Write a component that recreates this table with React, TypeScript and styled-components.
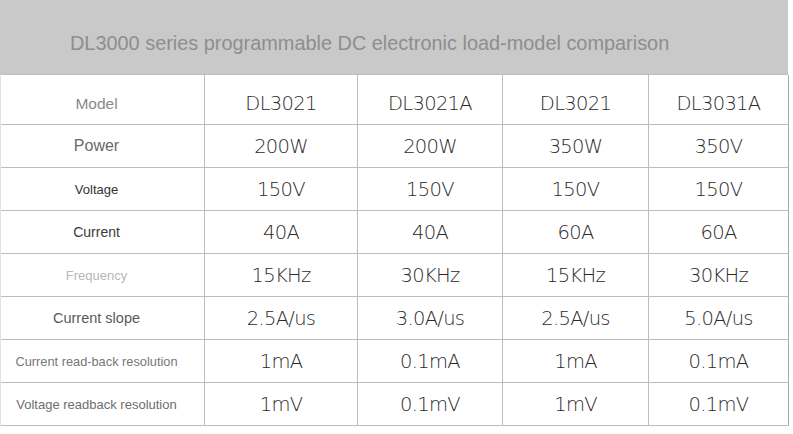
import React from "react";
import styled, { createGlobalStyle } from "styled-components";

const Global = createGlobalStyle`
  html, body { margin: 0; padding: 0; background: #ffffff; }
  body { font-family: "Liberation Sans", Arial, sans-serif; }
`;

const Page = styled.div`
  width: 793px;
  height: 434px;
  overflow: hidden;
  background: #ffffff;
`;

const Banner = styled.div`
  width: 788px;
  height: 74px;
  background: #c9c9c9;
  box-sizing: border-box;
  padding: 12px 0 0 70px;
  display: flex;
  align-items: center;
`;

const Title = styled.h1`
  margin: 0;
  font-family: "Liberation Sans", Arial, sans-serif;
  font-weight: 400;
  font-size: 19.9px;
  color: #8e8e8e;
  letter-spacing: 0;
`;

const Grid = styled.div`
  width: 788px;
  box-sizing: border-box;
  display: grid;
  grid-template-columns: 204px 153px 145px 146px 140px;
  grid-template-rows: 50px repeat(7, 43px);
  border-top: 1px solid #bdbdbd;
  border-left: 1px solid #e2e2e2;
`;

const Cell = styled.div<{ $last?: boolean; $first?: boolean }>`
  display: flex;
  align-items: center;
  justify-content: center;
  border-right: 1px solid ${(p) => (p.$last ? "#a8a8a8" : "#bdbdbd")};
  border-bottom: 1px solid #bdbdbd;
  box-sizing: border-box;
  padding-top: ${(p) => (p.$first ? "8px" : "0")};
  white-space: nowrap;
`;

const LabelCell = styled(Cell)<{ $size: number; $color: string }>`
  padding-right: 12px;
  font-family: "Liberation Sans", Arial, sans-serif;
  font-size: ${(p) => p.$size}px;
  color: ${(p) => p.$color};
  font-weight: 400;
`;

const ValueCell = styled(Cell)`
  font-family: "DejaVu Sans", "Liberation Sans", sans-serif;
  font-weight: 200;
  font-size: 19.5px;
  color: #2a2a2a;
  letter-spacing: -0.7px;
`;

type Row = {
  label: string;
  size: number;
  color: string;
  values: string[];
};

const rows: Row[] = [
  { label: "Model", size: 15.5, color: "#8a8a8a", values: ["DL3021", "DL3021A", "DL3021", "DL3031A"] },
  { label: "Power", size: 16, color: "#6a6a6a", values: ["200W", "200W", "350W", "350V"] },
  { label: "Voltage", size: 13, color: "#333333", values: ["150V", "150V", "150V", "150V"] },
  { label: "Current", size: 14, color: "#3a3a3a", values: ["40A", "40A", "60A", "60A"] },
  { label: "Frequency", size: 13, color: "#b8b8b8", values: ["15KHz", "30KHz", "15KHz", "30KHz"] },
  { label: "Current slope", size: 14.5, color: "#5a5a5a", values: ["2.5A/us", "3.0A/us", "2.5A/us", "5.0A/us"] },
  { label: "Current read-back resolution", size: 12.8, color: "#777777", values: ["1mA", "0.1mA", "1mA", "0.1mA"] },
  { label: "Voltage readback resolution", size: 13, color: "#6e6e6e", values: ["1mV", "0.1mV", "1mV", "0.1mV"] },
];

export default function App() {
  return (
    <Page>
      <Global />
      <Banner>
        <Title>DL3000 series programmable DC electronic load-model comparison</Title>
      </Banner>
      <Grid>
        {rows.map((r, ri) => (
          <React.Fragment key={r.label}>
            <LabelCell $size={r.size} $color={r.color} $first={ri === 0}>
              {r.label}
            </LabelCell>
            {r.values.map((v, i) => (
              <ValueCell key={i} $last={i === 3} $first={ri === 0}>
                {v}
              </ValueCell>
            ))}
          </React.Fragment>
        ))}
      </Grid>
    </Page>
  );
}
